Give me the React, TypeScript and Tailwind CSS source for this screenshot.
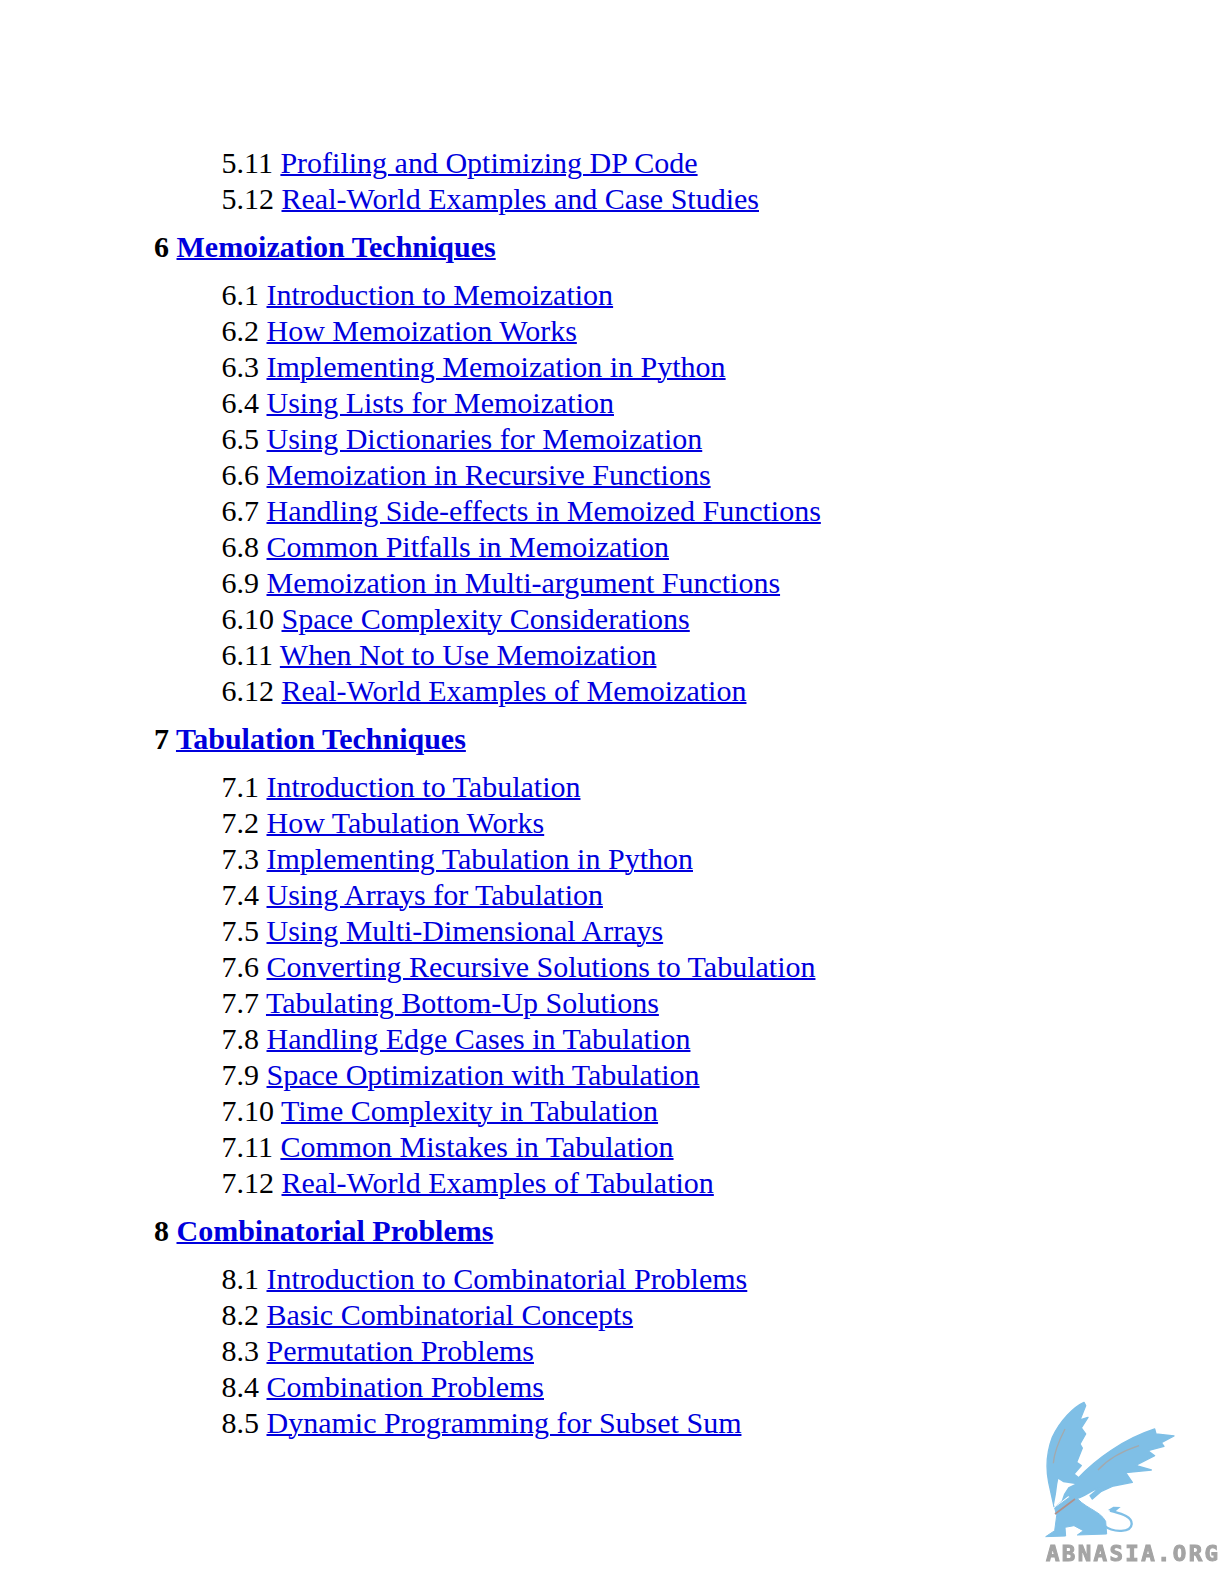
const serif = "font-['Liberation_Serif',serif]";

type Chapter = { num: string; title?: string; items: [string, string][] };

const chapters: Chapter[] = [
  {
    num: '5',
    items: [
      ['5.11', 'Profiling and Optimizing DP Code'],
      ['5.12', 'Real-World Examples and Case Studies'],
    ],
  },
  {
    num: '6',
    title: 'Memoization Techniques',
    items: [
      ['6.1', 'Introduction to Memoization'],
      ['6.2', 'How Memoization Works'],
      ['6.3', 'Implementing Memoization in Python'],
      ['6.4', 'Using Lists for Memoization'],
      ['6.5', 'Using Dictionaries for Memoization'],
      ['6.6', 'Memoization in Recursive Functions'],
      ['6.7', 'Handling Side-effects in Memoized Functions'],
      ['6.8', 'Common Pitfalls in Memoization'],
      ['6.9', 'Memoization in Multi-argument Functions'],
      ['6.10', 'Space Complexity Considerations'],
      ['6.11', 'When Not to Use Memoization'],
      ['6.12', 'Real-World Examples of Memoization'],
    ],
  },
  {
    num: '7',
    title: 'Tabulation Techniques',
    items: [
      ['7.1', 'Introduction to Tabulation'],
      ['7.2', 'How Tabulation Works'],
      ['7.3', 'Implementing Tabulation in Python'],
      ['7.4', 'Using Arrays for Tabulation'],
      ['7.5', 'Using Multi-Dimensional Arrays'],
      ['7.6', 'Converting Recursive Solutions to Tabulation'],
      ['7.7', 'Tabulating Bottom-Up Solutions'],
      ['7.8', 'Handling Edge Cases in Tabulation'],
      ['7.9', 'Space Optimization with Tabulation'],
      ['7.10', 'Time Complexity in Tabulation'],
      ['7.11', 'Common Mistakes in Tabulation'],
      ['7.12', 'Real-World Examples of Tabulation'],
    ],
  },
  {
    num: '8',
    title: 'Combinatorial Problems',
    items: [
      ['8.1', 'Introduction to Combinatorial Problems'],
      ['8.2', 'Basic Combinatorial Concepts'],
      ['8.3', 'Permutation Problems'],
      ['8.4', 'Combination Problems'],
      ['8.5', 'Dynamic Programming for Subset Sum'],
    ],
  },
];

function Watermark() {
  return (
    <div className="absolute left-[1024px] top-[1384px] h-[200px] w-[200px]">
      <svg viewBox="0 0 600 600" className="absolute inset-0 h-full w-full blur-[0.4px]">
        {/* left wing */}
        <path
          fill="#7fbfe6"
          strokeLinejoin="round"
          stroke="#7fbfe6"
          strokeWidth="4"
          d="M180 55 C150 68 108 110 85 160 C68 205 66 255 74 295 L90 368 L175 300 L165 282 L150 270 L172 245 L158 235 L175 192 L168 180 L185 150 L172 132 L192 100 L168 108 L185 65 Z"
        />
        {/* right wing */}
        <path
          fill="#7fbfe6"
          strokeLinejoin="round"
          stroke="#7fbfe6"
          strokeWidth="4"
          d="M160 285 C215 225 300 165 392 135 L396 150 L450 156 L412 176 L420 187 L372 200 L392 215 L335 244 L382 258 L305 266 L325 295 L268 306 L232 322 L205 345 L198 335 L226 312 C200 318 175 345 150 345 L110 320 Z"
        />
        {/* body */}
        <path
          fill="#7fbfe6"
          strokeLinejoin="round"
          stroke="#7fbfe6"
          strokeWidth="3"
          d="M92 372 L150 330 C175 372 228 378 245 412 L248 450 L160 453 L178 440 L150 425 L123 430 L125 456 L65 458 L92 440 L98 395 Z"
        />
        {/* tail */}
        <path
          d="M240 425 C270 448 322 445 323 420 C324 395 285 388 258 380"
          stroke="#7fbfe6"
          strokeWidth="7"
          fill="none"
        />
        <path fill="#7fbfe6" d="M252 378 L268 368 L290 369 L272 384 Z" />
        {/* head and neck */}
        <path fill="#ffffff" d="M103 285 L118 295 L153 300 L133 310 L120 330 L113 350 L92 370 L90 362 L96 330 L100 300 Z" />
        <path d="M123 135 C105 170 90 205 88 238" stroke="#a3a9ad" strokeWidth="4" fill="none" />
        <path d="M345 185 C305 198 255 222 222 258" stroke="#a3a9ad" strokeWidth="4" fill="none" />
        <path d="M153 345 L93 390" stroke="#b0908a" strokeWidth="5" fill="none" />
      </svg>
      <span className="absolute left-[22px] top-[157px] origin-left scale-x-[1.02] font-['DejaVu_Sans_Mono',monospace] text-[22px] font-bold leading-[26px] tracking-[2.3px] text-[#a4a4a4] blur-[0.4px] [-webkit-text-stroke:1px_#a4a4a4]">
        ABNASIA.ORG
      </span>
    </div>
  );
}

export default function App() {
  return (
    <div className={`relative h-[1584px] w-[1224px] overflow-hidden bg-white pl-[154px] pt-[145px] text-[30px] leading-[36px] text-black ${serif}`}>
      {chapters.map((ch) => (
        <section key={ch.num}>
          {ch.title && (
            <h2 className="mb-[12px] mt-[12px] font-bold">
              {ch.num}{' '}
              <a href="#" className="text-[#0000dd] underline decoration-2">
                {ch.title}
              </a>
            </h2>
          )}
          <ul className="pl-[67.5px]">
            {ch.items.map(([n, label]) => (
              <li key={n}>
                {n}{' '}
                <a href="#" className="text-[#0000dd] underline decoration-2">
                  {label}
                </a>
              </li>
            ))}
          </ul>
        </section>
      ))}
      <Watermark />
    </div>
  );
}
